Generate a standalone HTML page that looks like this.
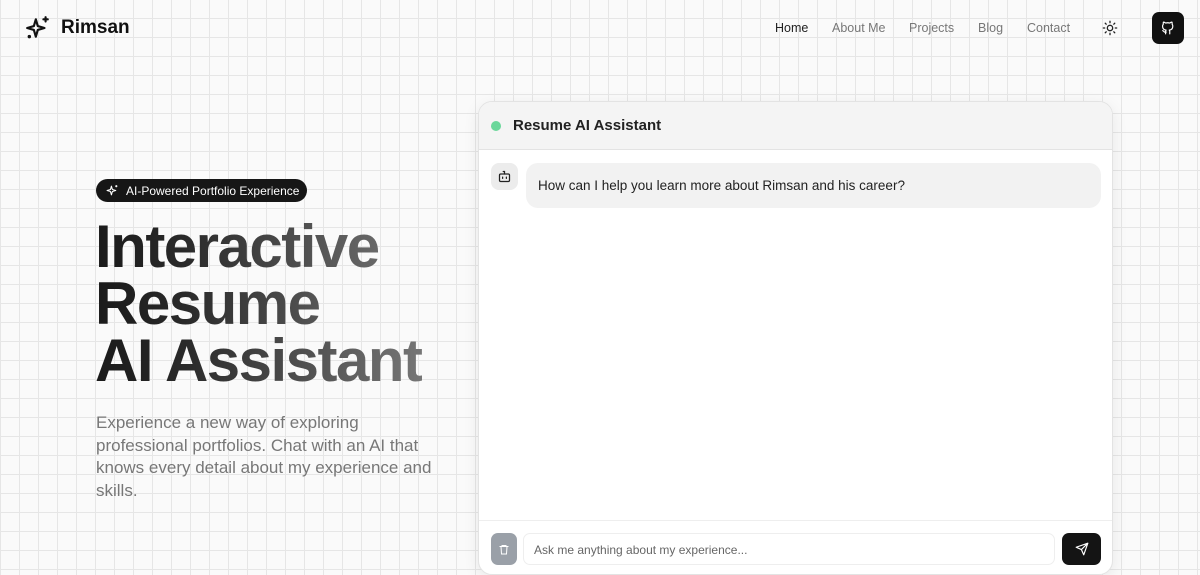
<!DOCTYPE html>
<html><head><meta charset="utf-8"><style>
*{box-sizing:border-box;margin:0;padding:0}
body{width:1200px;height:575px;overflow:hidden;font-family:"Liberation Sans",sans-serif;background-color:#fafafa;
background-image:linear-gradient(to right,#e6e6e6 1px,transparent 1px),linear-gradient(to bottom,#e6e6e6 1px,transparent 1px);
background-size:19px 19px;background-position:0 -1px;position:relative}
.logo{position:absolute;left:25px;top:15px;display:flex;align-items:center;gap:10px;font-weight:700;font-size:19px;color:#111}
nav{position:absolute;top:21px;left:775px;font-size:12.5px;color:#777}
nav span{position:absolute;white-space:nowrap}
.gh{position:absolute;left:1152px;top:12px;width:32px;height:32px;background:#111;border-radius:7px;display:flex;align-items:center;justify-content:center}
.badge{position:absolute;left:96px;top:179px;height:23px;width:211px;background:#161616;border-radius:12px;color:#fff;font-size:12px;display:flex;align-items:center;padding-left:10px;gap:7px}
h1{position:absolute;left:95px;top:218px;font-size:60px;line-height:57px;font-weight:700;letter-spacing:-1.5px;
background:linear-gradient(90deg,#1a1a1a 0px,#2a2a2a 90px,#777 330px);-webkit-background-clip:text;background-clip:text;color:transparent}
p.sub{position:absolute;left:96px;top:412px;width:350px;font-size:17px;line-height:22.5px;color:#777}
.card{position:absolute;left:478px;top:101px;width:635px;height:474px;background:#fff;border:1px solid #e3e3e3;border-radius:14px;box-shadow:0 4px 16px rgba(0,0,0,.08);overflow:hidden}
.hd{height:48px;background:#f4f4f4;border-bottom:1px solid #e3e3e3;display:flex;align-items:center;padding-left:12px;gap:12px;font-weight:700;font-size:15px;color:#222}
.dot{width:10px;height:10px;border-radius:50%;background:#6ad79a}
.av{position:absolute;left:12px;top:61px;width:27px;height:27px;border-radius:8px;background:#ececec;display:flex;align-items:center;justify-content:center}
.msg{position:absolute;left:47px;top:61px;width:575px;height:45px;background:#f2f2f2;border-radius:12px;font-size:13.5px;color:#222;padding:15px 12px}
.ft{position:absolute;left:0;top:418px;width:100%;border-top:1px solid #eee}
.del{position:absolute;left:12px;top:431px;width:26px;height:32px;border-radius:7px;background:#9aa0a8;display:flex;align-items:center;justify-content:center}
.inp{position:absolute;left:44px;top:431px;width:532px;height:32px;border:1px solid #eee;border-radius:7px;font-size:12px;color:#666;padding:9px 10px}
.snd{position:absolute;left:583px;top:431px;width:39px;height:32px;border-radius:7px;background:#141414;display:flex;align-items:center;justify-content:center}
</style></head><body>
<div class="logo"><svg width="26" height="26" viewBox="0 0 24 24" fill="none" stroke="#111" stroke-width="2" stroke-linejoin="round" stroke-linecap="round"><path d="M10 4 L11.8 10.2 L18 12 L11.8 13.8 L10 20 L8.2 13.8 L2 12 L8.2 10.2Z"/><path d="M19 2v4M17 4h4"/><circle cx="4" cy="20" r=".6" fill="#111"/></svg>Rimsan</div>
<nav><span style="left:0;color:#222">Home</span><span style="left:57px">About Me</span><span style="left:134px">Projects</span><span style="left:203px">Blog</span><span style="left:252px">Contact</span></nav>
<svg style="position:absolute;left:1102px;top:20px" width="16" height="16" viewBox="0 0 24 24" fill="none" stroke="#222" stroke-width="2" stroke-linecap="round"><circle cx="12" cy="12" r="4"/><path d="M12 2v2M12 20v2M2 12h2M20 12h2M4.9 4.9l1.4 1.4M17.7 17.7l1.4 1.4M4.9 19.1l1.4-1.4M17.7 6.3l1.4-1.4"/></svg>
<div class="gh"><svg width="14" height="14" viewBox="0 0 24 24" fill="none" stroke="#fff" stroke-width="2" stroke-linecap="round" stroke-linejoin="round"><path d="M9 19c-4 1.5-4-2-6-2.5M15 22v-3.9a3.4 3.4 0 0 0-.9-2.6c3-.3 6.1-1.5 6.1-6.6A5.2 5.2 0 0 0 19 5.3 4.8 4.8 0 0 0 18.900 2S17.7 1.6 15 3.5a13.4 13.4 0 0 0-7 0C5.3 1.6 4.1 2 4.1 2A4.8 4.8 0 0 0 4 5.3a5.2 5.2 0 0 0-1.3 3.6c0 5.1 3.1 6.300 6.1 6.6a3.4 3.4 0 0 0-.9 2.6V22"/></svg></div>
<div class="badge"><svg width="13" height="13" viewBox="0 0 24 24" fill="none" stroke="#fff" stroke-width="2" stroke-linejoin="round"><path d="M10 4 L11.8 10.2 L18 12 L11.8 13.8 L10 20 L8.2 13.8 L2 12 L8.2 10.2Z"/><path d="M19 2v4M17 4h4"/></svg>AI-Powered Portfolio Experience</div>
<h1>Interactive<br>Resume<br>AI Assistant</h1>
<p class="sub">Experience a new way of exploring professional portfolios. Chat with an AI that knows every detail about my experience and skills.</p>
<div class="card">
<div class="hd"><div class="dot"></div>Resume AI Assistant</div>
<div class="av"><svg width="15" height="15" viewBox="0 0 24 24" fill="none" stroke="#222" stroke-width="2" stroke-linecap="round"><rect x="4" y="8" width="16" height="12" rx="2"/><path d="M12 8V4h-2M9 13v2M15 13v2"/></svg></div>
<div class="msg">How can I help you learn more about Rimsan and his career?</div>
<div class="ft"></div>
<div class="del"><svg width="12" height="13" viewBox="0 0 24 24" fill="none" stroke="#fff" stroke-width="2"><path d="M3 6h18M8 6V4h8v2M6 6l1 15h10l1-15"/></svg></div>
<div class="inp">Ask me anything about my experience...</div>
<div class="snd"><svg width="14" height="14" viewBox="0 0 24 24" fill="none" stroke="#fff" stroke-width="2" stroke-linejoin="round"><path d="M22 2L11 13M22 2l-7 20-4-9-9-4z"/></svg></div>
</div>
</body></html>
